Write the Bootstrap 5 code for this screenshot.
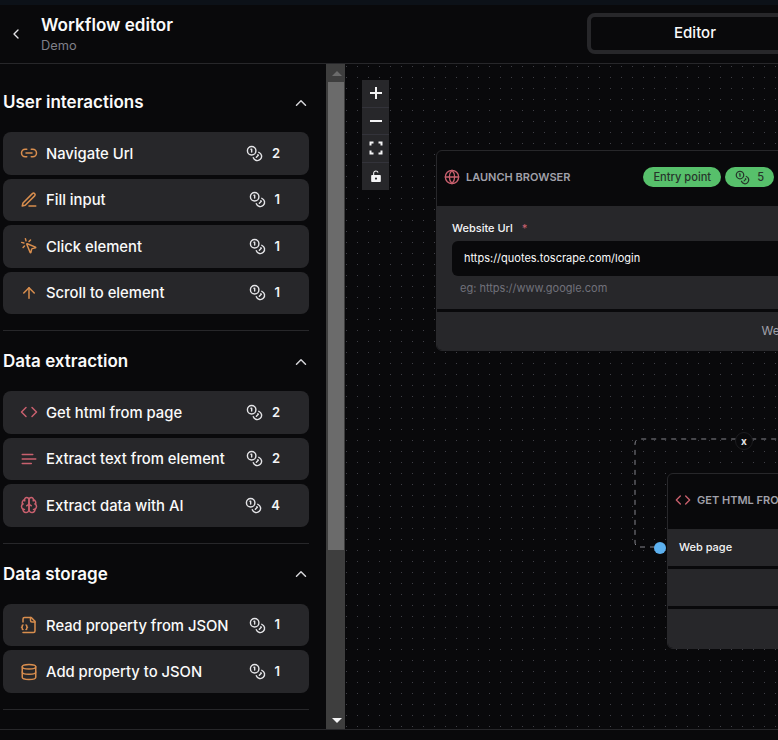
<!doctype html>
<html lang="en">
<head>
<meta charset="utf-8">
<title>Workflow editor</title>
<link href="https://cdn.jsdelivr.net/npm/bootstrap@5.3.0/dist/css/bootstrap.min.css" rel="stylesheet">
<style>
html,body{height:100%;}
body{background:#09090b;color:#fafafa;font-family:Inter,"Liberation Sans",sans-serif;width:778px;height:740px;overflow:hidden;}
svg.ic{fill:none;stroke:currentColor;stroke-width:2;stroke-linecap:round;stroke-linejoin:round;flex-shrink:0;display:block;}
.top-strip{height:5px;background:#0c1118;}
.head-bar{height:59px;border-bottom:1px solid #27272a;flex-shrink:0;}
.head-left{width:587px;flex-shrink:0;}
.back-box{width:32px;margin-right:9px;color:#e4e4e7;padding-left:8px;}
.flow-title{font-size:17.1px;font-weight:600;line-height:22px;}
.flow-sub{font-size:12.8px;line-height:16px;color:#7f7f88;margin-top:2px;font-weight:400;}
.tab-frame{width:216px;height:41px;flex-shrink:0;border:4px solid #27272a;border-radius:8px;font-size:15px;font-weight:500;margin-top:-2px;padding-top:1px;}
.work-row{height:665px;flex-shrink:0;}
.side-col{width:326px;flex-shrink:0;overflow:hidden;padding:8px 17px 0 3px;}
.grp{border-bottom:1px solid #27272a;padding-bottom:16.2px;}
.grp-head{height:60px;font-size:17px;font-weight:600;padding-top:1px;}
.grp-head svg{margin-right:-1px;color:#d4d4d8;}
.task-list{gap:4px;}
.task-row{height:42.5px;background:#27272a;border-radius:8px;padding:0 29px 0 17px;font-size:14.8px;font-weight:500;color:#fafafa;}
.task-name{gap:8px;}
.task-text{padding-top:1px;}
.tone-o{color:#d98e4e;}
.tone-r{color:#c9606e;}
.cost{gap:9px;font-weight:600;font-size:13px;color:#f4f4f5;}
.cost svg{color:#e4e4e7;}
.scroll-col{width:19px;flex-shrink:0;background:#3e3e3e;padding-left:2px;}
.scroll-end{height:18px;}
.arrow-up{width:0;height:0;border-left:5px solid transparent;border-right:5px solid transparent;border-bottom:5px solid #6b6b6b;}
.arrow-down{width:0;height:0;border-left:5px solid transparent;border-right:5px solid transparent;border-top:5px solid #f4f4f5;}
.scroll-thumb{height:468px;width:16px;background:#6b6b6b;}
.flow-area{flex:1 1 auto;position:relative;overflow:hidden;background-color:#09090b;background-image:radial-gradient(circle at center,#3f3f46 .7px,transparent .9px);background-size:11px 11px;background-position:7px -3px;}
.ctrl-stack{position:absolute;left:17px;top:16px;width:27px;background:#27272a;}
.ctrl-btn{height:27.5px;border-bottom:1px solid #33333a;color:#f4f4f5;}
.ctrl-btn:last-child{border-bottom:0;}
.wf-node{position:absolute;width:420px;border:1px solid #27272a;border-radius:6px;background:#09090b;overflow:hidden;}
.node-a{left:91px;top:86px;}
.node-b{left:322px;top:409px;}
.node-head{height:55px;padding:0 7px 3px;gap:6px;font-size:11px;font-weight:600;color:#a1a1aa;}
.node-lbl{gap:6px;}
.node-gap{gap:3px;}
.node-cell{background:#27272a;}
.cell-a{height:103px;padding:15px 15px 0 15px;}
.cell-b{height:38px;padding-right:36px;font-size:12px;color:#a1a1aa;}
.cell-c{height:37px;padding-left:11px;font-size:11px;font-weight:500;color:#f4f4f5;}
.cell-d{height:37px;}
.cell-e{height:39px;}
.field-lbl{font-size:11px;font-weight:500;line-height:14px;color:#f4f4f5;}
.req{color:#c9606e;margin-left:6px;}
.field-input{height:35px;margin-top:6px;background:#09090b;color:#fafafa;font-size:11px;padding:0 12px;border-radius:6px;}
.field-hint{font-size:11px;color:#71717a;padding:5px 8px 0;line-height:14px;}
.pill-g{background:#57c06b;color:#27352b;font-size:11.1px;font-weight:500;height:20px;padding:0 10px;border-radius:10px;gap:7px;}
.pill-row{gap:4px;margin-right:74px;}
.edge-svg{position:absolute;left:280px;top:360px;}
.edge-x{position:absolute;left:390px;top:368px;width:18px;height:18px;border-radius:50%;background:#09090b;border:1px solid #1c1c1f;font-size:10px;font-weight:700;color:#e4e4e7;line-height:1;}
.port{position:absolute;left:309px;top:478px;width:12px;height:12px;border-radius:50%;background:#5cb0ee;}
.foot-bar{height:11px;border-top:1px solid #27272a;}
</style>
</head>
<body class="d-flex flex-column">
<svg width="0" height="0" class="position-absolute">
<defs>
<symbol id="i-coins" viewBox="0 0 24 24"><circle cx="8" cy="8" r="6"/><path d="M18.09 10.37A6 6 0 1 1 10.34 18"/><path d="M7 6h1v4"/><path d="m16.71 13.88.7.71-2.82 2.82"/></symbol>
<symbol id="i-up" viewBox="0 0 24 24"><path d="m18 15-6-6-6 6"/></symbol>
<symbol id="i-code" viewBox="0 0 24 24"><path d="m16 18 6-6-6-6"/><path d="m8 6-6 6 6 6"/></symbol>
</defs>
</svg>
<div class="top-strip flex-shrink-0"></div>
<header class="head-bar d-flex align-items-center">
  <div class="head-left d-flex align-items-center">
    <div class="back-box"><svg class="ic" width="16" height="16" viewBox="0 0 24 24"><path d="m15 18-6-6 6-6"/></svg></div>
    <div>
      <div class="flow-title">Workflow editor</div>
      <div class="flow-sub">Demo</div>
    </div>
  </div>
  <div class="tab-frame d-flex align-items-center justify-content-center">Editor</div>
</header>
<main class="work-row d-flex">
  <aside class="side-col">
    <section class="grp">
      <div class="grp-head d-flex align-items-center justify-content-between"><span>User interactions</span><svg class="ic" width="18" height="18"><use href="#i-up"/></svg></div>
      <div class="task-list d-flex flex-column">
        <div class="task-row d-flex align-items-center justify-content-between"><span class="task-name d-flex align-items-center"><svg class="ic tone-o" width="18" height="18" viewBox="0 0 24 24"><path d="M9 17H7A5 5 0 0 1 7 7h2"/><path d="M15 7h2a5 5 0 1 1 0 10h-2"/><path d="M8 12h8"/></svg><span class="task-text">Navigate Url</span></span><span class="cost d-flex align-items-center"><svg class="ic" width="17" height="17"><use href="#i-coins"/></svg>2</span></div>
        <div class="task-row d-flex align-items-center justify-content-between"><span class="task-name d-flex align-items-center"><svg class="ic tone-o" width="18" height="18" viewBox="0 0 24 24"><path d="M12 20h9"/><path d="M16.5 3.5a2.12 2.12 0 0 1 3 3L7 19l-4 1 1-4Z"/></svg><span class="task-text">Fill input</span></span><span class="cost d-flex align-items-center"><svg class="ic" width="17" height="17"><use href="#i-coins"/></svg>1</span></div>
        <div class="task-row d-flex align-items-center justify-content-between"><span class="task-name d-flex align-items-center"><svg class="ic tone-o" width="18" height="18" viewBox="0 0 24 24"><path d="M14 4.1 12 6"/><path d="m5.1 8-2.9-.8"/><path d="m6 12-1.9 2"/><path d="M7.2 2.2 8 5.1"/><path d="M9.037 9.69a.498.498 0 0 1 .653-.653l11 4.5a.5.5 0 0 1-.074.949l-4.349 1.041a1 1 0 0 0-.74.739l-1.04 4.35a.5.5 0 0 1-.95.074z"/></svg><span class="task-text">Click element</span></span><span class="cost d-flex align-items-center"><svg class="ic" width="17" height="17"><use href="#i-coins"/></svg>1</span></div>
        <div class="task-row d-flex align-items-center justify-content-between"><span class="task-name d-flex align-items-center"><svg class="ic tone-o" width="18" height="18" viewBox="0 0 24 24"><path d="m5 12 7-7 7 7"/><path d="M12 19V5"/></svg><span class="task-text">Scroll to element</span></span><span class="cost d-flex align-items-center"><svg class="ic" width="17" height="17"><use href="#i-coins"/></svg>1</span></div>
      </div>
    </section>
    <section class="grp">
      <div class="grp-head d-flex align-items-center justify-content-between"><span>Data extraction</span><svg class="ic" width="18" height="18"><use href="#i-up"/></svg></div>
      <div class="task-list d-flex flex-column">
        <div class="task-row d-flex align-items-center justify-content-between"><span class="task-name d-flex align-items-center"><svg class="ic tone-r" width="18" height="18"><use href="#i-code"/></svg><span class="task-text">Get html from page</span></span><span class="cost d-flex align-items-center"><svg class="ic" width="17" height="17"><use href="#i-coins"/></svg>2</span></div>
        <div class="task-row d-flex align-items-center justify-content-between"><span class="task-name d-flex align-items-center"><svg class="ic tone-r" width="18" height="18" viewBox="0 0 24 24"><path d="M17 6.1H3"/><path d="M21 12.1H3"/><path d="M15.1 18H3"/></svg><span class="task-text">Extract text from element</span></span><span class="cost d-flex align-items-center"><svg class="ic" width="17" height="17"><use href="#i-coins"/></svg>2</span></div>
        <div class="task-row d-flex align-items-center justify-content-between"><span class="task-name d-flex align-items-center"><svg class="ic tone-r" width="18" height="18" viewBox="0 0 24 24"><path d="M12 5a3 3 0 1 0-5.997.125 4 4 0 0 0-2.526 5.77 4 4 0 0 0 .556 6.588A4 4 0 1 0 12 18Z"/><path d="M12 5a3 3 0 1 1 5.997.125 4 4 0 0 1 2.526 5.77 4 4 0 0 1-.556 6.588A4 4 0 1 1 12 18Z"/><path d="M15 13a4.5 4.5 0 0 1-3-4 4.5 4.5 0 0 1-3 4"/><path d="M17.599 6.5a3 3 0 0 0 .399-1.375"/><path d="M6.003 5.125A3 3 0 0 0 6.401 6.5"/><path d="M3.477 10.896a4 4 0 0 1 .585-.396"/><path d="M19.938 10.5a4 4 0 0 1 .585.396"/><path d="M6 18a4 4 0 0 1-1.967-.516"/><path d="M19.967 17.484A4 4 0 0 1 18 18"/></svg><span class="task-text">Extract data with AI</span></span><span class="cost d-flex align-items-center"><svg class="ic" width="17" height="17"><use href="#i-coins"/></svg>4</span></div>
      </div>
    </section>
    <section class="grp">
      <div class="grp-head d-flex align-items-center justify-content-between"><span>Data storage</span><svg class="ic" width="18" height="18"><use href="#i-up"/></svg></div>
      <div class="task-list d-flex flex-column">
        <div class="task-row d-flex align-items-center justify-content-between"><span class="task-name d-flex align-items-center"><svg class="ic tone-o" width="18" height="18" viewBox="0 0 24 24"><path d="M4 22h14a2 2 0 0 0 2-2V7l-5-5H6a2 2 0 0 0-2 2v4"/><path d="M14 2v4a2 2 0 0 0 2 2h4"/><path d="M4 12a1 1 0 0 0-1 1v1a1 1 0 0 1-1 1 1 1 0 0 1 1 1v1a1 1 0 0 0 1 1"/><path d="M8 18a1 1 0 0 0 1-1v-1a1 1 0 0 1 1-1 1 1 0 0 1-1-1v-1a1 1 0 0 0-1-1"/></svg><span class="task-text">Read property from JSON</span></span><span class="cost d-flex align-items-center"><svg class="ic" width="17" height="17"><use href="#i-coins"/></svg>1</span></div>
        <div class="task-row d-flex align-items-center justify-content-between"><span class="task-name d-flex align-items-center"><svg class="ic tone-o" width="18" height="18" viewBox="0 0 24 24"><ellipse cx="12" cy="5" rx="9" ry="3"/><path d="M3 5V19A9 3 0 0 0 21 19V5"/><path d="M3 12A9 3 0 0 0 21 12"/></svg><span class="task-text">Add property to JSON</span></span><span class="cost d-flex align-items-center"><svg class="ic" width="17" height="17"><use href="#i-coins"/></svg>1</span></div>
      </div>
    </section>
  </aside>
  <div class="scroll-col d-flex flex-column">
    <div class="scroll-end d-flex align-items-center justify-content-center"><span class="arrow-up"></span></div>
    <div class="scroll-thumb"></div>
    <div class="flex-grow-1"></div>
    <div class="scroll-end d-flex align-items-center justify-content-center"><span class="arrow-down"></span></div>
  </div>
  <div class="flow-area">
    <svg class="edge-svg" width="160" height="200" fill="none" stroke="#85858c" stroke-width="1" stroke-dasharray="5 5"><path d="M30 123H15Q10 123 10 118V20Q10 15 15 15H160"/></svg>
    <div class="wf-node node-a">
      <div class="node-head d-flex align-items-center justify-content-between">
        <span class="node-lbl d-flex align-items-center"><svg class="ic tone-r" width="16" height="16" viewBox="0 0 24 24"><circle cx="12" cy="12" r="10"/><path d="M12 2a14.5 14.5 0 0 0 0 20 14.5 14.5 0 0 0 0-20"/><path d="M2 12h20"/></svg>LAUNCH BROWSER</span>
        <span class="pill-row d-flex align-items-center"><span class="pill-g d-flex align-items-center">Entry point</span><span class="pill-g d-flex align-items-center"><svg class="ic" width="15" height="15"><use href="#i-coins"/></svg>5</span></span>
      </div>
      <div class="node-gap d-flex flex-column">
        <div class="node-cell cell-a">
          <div class="field-lbl">Website Url <span class="req">*</span></div>
          <div class="field-input d-flex align-items-center">https://quotes.toscrape.com/login</div>
          <div class="field-hint">eg: https://www.google.com</div>
        </div>
        <div class="node-cell cell-b d-flex align-items-center justify-content-end">Web page</div>
      </div>
    </div>
    <div class="wf-node node-b">
      <div class="node-head d-flex align-items-center">
        <span class="node-lbl d-flex align-items-center"><svg class="ic tone-r" width="16" height="16"><use href="#i-code"/></svg>GET HTML FROM PAGE</span>
      </div>
      <div class="node-gap d-flex flex-column">
        <div class="node-cell cell-c d-flex align-items-center">Web page</div>
        <div class="node-cell cell-d"></div>
        <div class="node-cell cell-e"></div>
      </div>
    </div>
    <div class="port"></div>
    <div class="edge-x d-flex align-items-center justify-content-center">x</div>
    <div class="ctrl-stack">
      <div class="ctrl-btn d-flex align-items-center justify-content-center"><svg class="ic" width="16" height="16" viewBox="0 0 16 16"><path d="M8 2v12M2 8h12" stroke-linecap="butt"/></svg></div>
      <div class="ctrl-btn d-flex align-items-center justify-content-center"><svg class="ic" width="16" height="16" viewBox="0 0 16 16"><path d="M2 8h12" stroke-linecap="butt"/></svg></div>
      <div class="ctrl-btn d-flex align-items-center justify-content-center"><svg class="ic" width="14" height="14" viewBox="0 0 14 14"><path d="M1.5 4.5V1.500H4.500M9.500 1.500H12.500V4.500M12.500 9.500V12.500H9.500M4.500 12.500H1.500V9.500" stroke-linecap="butt" stroke-linejoin="miter"/></svg></div>
      <div class="ctrl-btn d-flex align-items-center justify-content-center"><svg width="10" height="12.500" viewBox="0 0 12 15" class="d-block"><path d="M3.200 6.500V3.800C3.200 2.300 4.400 1.200 5.900 1.200 7.100 1.200 8.100 1.900 8.500 3" fill="none" stroke="#f4f4f5" stroke-width="1.300"/><path fill="#f4f4f5" fill-rule="evenodd" d="M1.200 6h9.600a1 1 0 0 1 1 1v6.500a1 1 0 0 1-1 1H1.200a1 1 0 0 1-1-1V7a1 1 0 0 1 1-1zM6 9a1.300 1.300 0 1 0 0 2.600A1.300 1.300 0 0 0 6 9z"/></svg></div>
    </div>
  </div>
</main>
<footer class="foot-bar flex-shrink-0"></footer>
<script src="https://cdn.jsdelivr.net/npm/bootstrap@5.3.0/dist/js/bootstrap.bundle.min.js"></script>
</body>
</html>
